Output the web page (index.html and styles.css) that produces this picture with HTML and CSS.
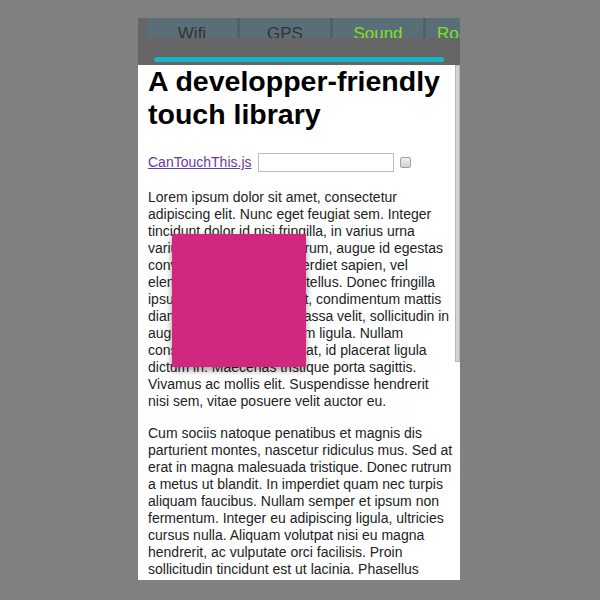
FILE: index.html
```html
<!DOCTYPE html>
<html>
<head>
<meta charset="utf-8">
<title>CanTouchThis.js</title>
<link rel="stylesheet" href="styles.css">
</head>
<body>
<div class="device">
  <nav class="tabs">
    <div class="tab">Wifi</div>
    <div class="tab">GPS</div>
    <div class="tab on">Sound</div>
    <div class="tab on">Roaming</div>
  </nav>
  <div class="bar"><div class="progress"></div></div>
  <div class="content">
    <main class="page">
      <h1>A developper-friendly<br>touch library</h1>
      <p class="tools"><a href="#" class="lib">CanTouchThis.js</a><input class="field" type="text"><span class="check"></span></p>
      <p>Lorem ipsum dolor sit amet, consectetur<br>adipiscing elit. Nunc eget feugiat sem. Integer<br>tincidunt dolor id nisi fringilla, in varius urna<br>varius nibh. Phasellus rutrum, augue id egestas<br>convallis, ante purus imperdiet sapien, vel<br>elementum lectus, nisi et tellus. Donec fringilla<br>ipsum nec risus tempor ut, condimentum mattis<br>diam vel augue aliquet massa velit, sollicitudin in<br>augue, non pharetra ipsum ligula. Nullam<br>consequat mollis, vitae erat, id placerat ligula<br>dictum in. Maecenas tristique porta sagittis.<br>Vivamus ac mollis elit. Suspendisse hendrerit<br>nisi sem, vitae posuere velit auctor eu.</p>
      <p>Cum sociis natoque penatibus et magnis dis<br>parturient montes, nascetur ridiculus mus. Sed at<br>erat in magna malesuada tristique. Donec rutrum<br>a metus ut blandit. In imperdiet quam nec turpis<br>aliquam faucibus. Nullam semper et ipsum non<br>fermentum. Integer eu adipiscing ligula, ultricies<br>cursus nulla. Aliquam volutpat nisi eu magna<br>hendrerit, ac vulputate orci facilisis. Proin<br>sollicitudin tincidunt est ut lacinia. Phasellus<br>porta odio sit amet ullamcorper dignissim, at<br>vestibulum erat tellus sed nulla.</p>
    </main>
    <div class="scrollbar"><div class="thumb"></div></div>
    <div class="touch-box"></div>
  </div>
</div>
</body>
</html>
```
FILE: styles.css
```css
body {
  margin: 0;
  background: #808080;
  font-family: "Liberation Sans", Arial, sans-serif;
}

.device {
  margin: 18px 0 0 138px;
  width: 322px;
  height: 562px;
  display: flex;
  flex-direction: column;
  background: #666666;
  overflow: hidden;
}

.tabs {
  display: flex;
  flex-shrink: 0;
  height: 20px;
  padding-left: 9px;
  overflow: hidden;
}

.tab {
  flex: 0 0 90px;
  box-sizing: content-box;
  height: 13px;
  padding-top: 7px;
  background: #5a6e78;
  border-right: 3px solid #4f6169;
  color: #333333;
  font-size: 17px;
  line-height: 17px;
  text-align: center;
  overflow: hidden;
}

.tab.on {
  color: #84e01c;
}

.bar {
  flex-shrink: 0;
  box-sizing: border-box;
  height: 27px;
  padding: 19px 16px 3px;
}

.progress {
  height: 5px;
  border-radius: 3px;
  background: #19b4c8;
}

.content {
  flex: 1;
  min-height: 0;
  display: flex;
  position: relative;
  overflow: hidden;
  background: #ffffff;
}

.page {
  flex: 1;
  padding: 0 3px 0 10px;
  color: #222222;
  font-size: 14px;
  line-height: 17px;
}

.page h1 {
  margin: 0 0 22px;
  color: #000000;
  font-size: 28.5px;
  line-height: 33px;
  font-weight: bold;
}

.page p {
  margin: 0 0 15px;
  white-space: nowrap;
}

.page p.tools {
  display: flex;
  align-items: center;
  gap: 5px;
  margin-bottom: 17px;
}

.lib {
  color: #6a3aa0;
  text-decoration: underline;
}

.field {
  box-sizing: border-box;
  width: 136px;
  height: 19px;
  margin: 0 0 0 1px;
  padding: 1px 3px;
  border: 1px solid #bdbdbd;
  background: #ffffff;
  font: inherit;
}

.check {
  box-sizing: border-box;
  width: 11px;
  height: 11px;
  margin-left: 1px;
  border: 1px solid #a0a0a0;
  border-radius: 2px;
  background: linear-gradient(#f2f2f2, #d0d0d0);
}

.scrollbar {
  flex: 0 0 7px;
}

.thumb {
  box-sizing: border-box;
  width: 5px;
  height: 297px;
  background: #d4d4d4;
  border: 1px solid #b5b5b5;
}

.touch-box {
  position: absolute;
  left: 34px;
  top: 169px;
  width: 134px;
  height: 133px;
  background: #d1287f;
  box-shadow: 0 3px 7px rgba(0, 0, 0, 0.4);
}
```
